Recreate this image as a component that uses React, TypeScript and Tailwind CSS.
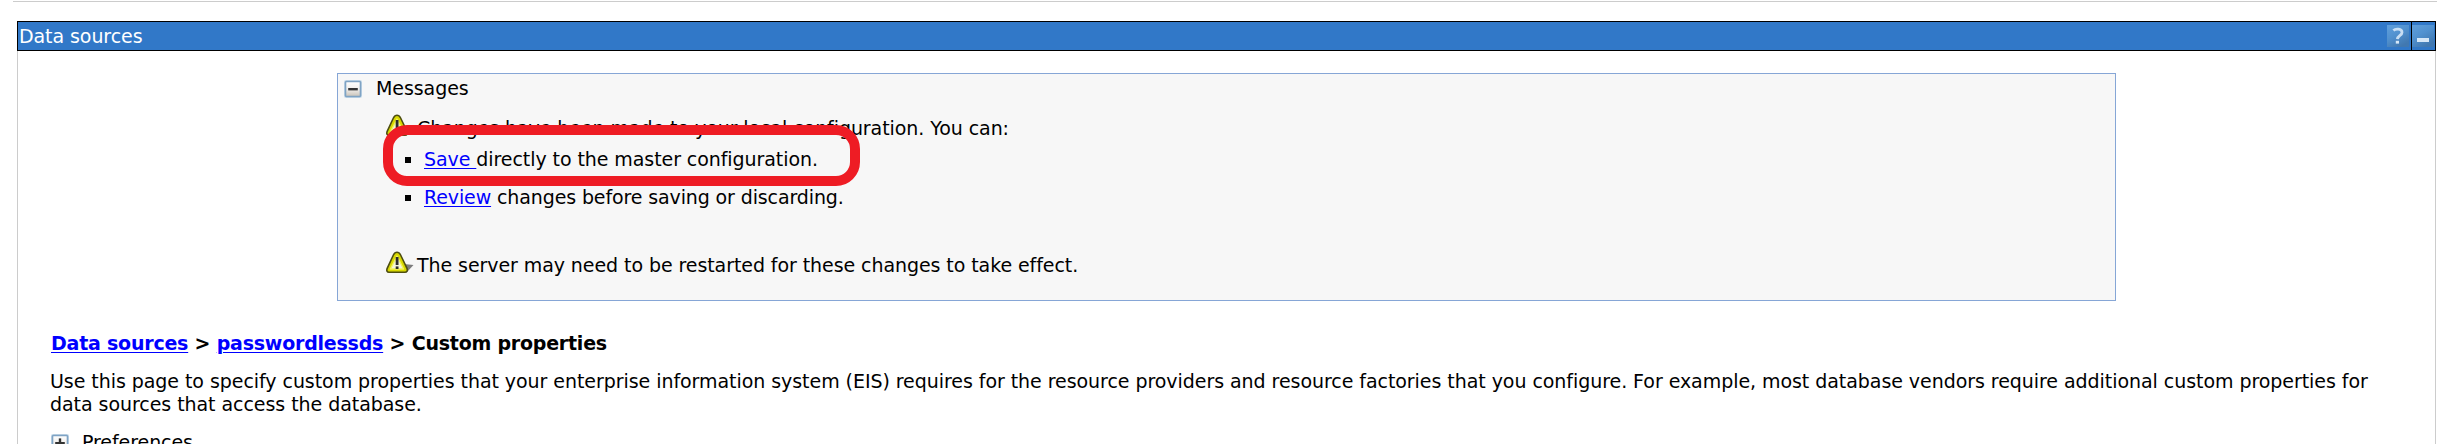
import React from 'react';

function ToggleIcon({ open }: { open: boolean }) {
  return (
    <svg width="18" height="18" viewBox="0 0 18 18" className="block shrink-0">
      <defs>
        <linearGradient id="toggleFill" x1="0" y1="0" x2="0" y2="1">
          <stop offset="0" stopColor="#ffffff" />
          <stop offset="0.5" stopColor="#f1efec" />
          <stop offset="1" stopColor="#c9c2b8" />
        </linearGradient>
      </defs>
      <rect x="0" y="0" width="18" height="18" rx="2" fill="#c5d8e8" />
      <rect x="1.5" y="1.5" width="15" height="15" rx="1" fill="url(#toggleFill)" stroke="#7fa3c4" strokeWidth="1.6" />
      <rect x="4.2" y="8" width="9.6" height="2.4" fill="#333333" />
      {!open && <rect x="7.8" y="4.4" width="2.4" height="9.6" fill="#333333" />}
    </svg>
  );
}

function WarningIcon() {
  return (
    <svg width="28" height="23" viewBox="0 0 28 23" className="block shrink-0">
      <path d="M18 13 L27.5 14 L21 21 L17 21 Z" fill="#5c5c5e" opacity="0.8" />
      <path d="M11 1.2 C13 1.2 13.8 2.4 14.6 4 L21 17.4 C21.8 19.6 21 21.2 19 21.2 L3 21.2 C1 21.2 0.3 19.6 1.2 17.4 L7.4 4 C8.2 2.4 9 1.2 11 1.2 Z" fill="#d8d800" stroke="#4e4e10" strokeWidth="1.6" />
      <path d="M11 5 L17.6 18 L4.4 18 Z" fill="#f4f4d8" stroke="#f2f25c" strokeWidth="1.4" strokeLinejoin="round" />
      <rect x="9.7" y="6" width="2.8" height="8" fill="#2b2b2b" />
      <rect x="9.7" y="15.4" width="2.8" height="2.6" fill="#2b2b2b" />
    </svg>
  );
}

function TitleButton({ children }: { children: React.ReactNode }) {
  return (
    <svg width="22" height="22" viewBox="0 0 22 22" className="block shrink-0">
      <defs>
        <linearGradient id="buttonFill" x1="0" y1="0" x2="0.6" y2="1">
          <stop offset="0" stopColor="#5f9fdc" />
          <stop offset="0.5" stopColor="#5191cf" />
          <stop offset="1" stopColor="#4178b0" />
        </linearGradient>
      </defs>
      <rect width="22" height="22" fill="url(#buttonFill)" />
      {children}
    </svg>
  );
}

const link = 'text-[#0000ff] underline decoration-1 underline-offset-2';

export default function App() {
  return (
    <div className="h-[444px] overflow-hidden bg-white font-['DejaVu_Sans',Verdana,sans-serif] text-[19px] leading-[23px] tracking-[-0.075px] text-black">
      <div className="mt-px ml-[13px] h-px bg-[#cccccc]" />
      <div className="mt-[19px] mr-px ml-[17px] flex h-[30px] border border-black bg-[#3178c8]">
        <h1 className="flex-1 pt-[3px] pl-px whitespace-nowrap text-white">Data sources</h1>
        <div className="flex w-[24px] pt-[3px]">
          <TitleButton>
            <path d="M6.4 5.4 C8.5 3.4 15 3.4 15 7.4 C15 10.4 10.8 10.4 10.4 14.2" fill="none" stroke="#c8def3" strokeWidth="2.8" />
            <rect x="8.8" y="15.8" width="3.2" height="2.8" fill="#d6e8f8" />
          </TitleButton>
        </div>
        <div className="flex w-[24px] border-l border-black pt-[3px]">
          <TitleButton>
            <rect x="5" y="13" width="12" height="4" fill="#d6e7f7" />
          </TitleButton>
        </div>
      </div>

      <div className="mr-px ml-[17px] h-[393px] border-x border-[#cccccc] pt-[22px]">
        <section className="relative ml-[319px] h-[228px] w-[1779px] border border-[#86a6d6] bg-[#f7f7f7]">
          <div className="flex items-start pt-[3px] pl-[6px]">
            <div className="mt-[3px]"><ToggleIcon open /></div>
            <h2 className="ml-[14px] whitespace-nowrap">Messages</h2>
          </div>
          <div className="mt-[17px] ml-[48px] flex">
            <div className="-mt-[3px]"><WarningIcon /></div>
            <p className="ml-[3px] whitespace-nowrap">Changes have been made to your local configuration. You can:</p>
          </div>
          <ul className="ml-[67px]">
            <li className="mt-[8px] flex items-center">
              <span className="mr-[13px] size-[6px] bg-black" />
              <p className="whitespace-pre"><a className={link}>{'Save '}</a>directly to the master configuration.</p>
            </li>
            <li className="mt-[15px] flex items-center">
              <span className="mr-[13px] size-[6px] bg-black" />
              <p className="whitespace-pre tracking-[-0.12px]"><a className={link}>Review</a> changes before saving or discarding.</p>
            </li>
          </ul>
          <div className="mt-[45px] ml-[48px] flex">
            <div className="-mt-[3px]"><WarningIcon /></div>
            <p className="ml-[3px] whitespace-nowrap">The server may need to be restarted for these changes to take effect.</p>
          </div>
          <div className="absolute top-[51px] left-[45px] h-[61px] w-[477px] rounded-[24px] border-[10px] border-[#ee1c24]" />
        </section>

        <nav className="mt-[31px] ml-[33px] whitespace-pre font-bold tracking-[-0.22px]">
          <a className={link}>Data sources</a>{' > '}<a className={link}>passwordlessds</a>{' > Custom properties'}
        </nav>
        <p className="mt-[15px] ml-[32px] whitespace-nowrap tracking-[-0.055px]">
          Use this page to specify custom properties that your enterprise information system (EIS) requires for the resource providers and resource factories that you configure. For example, most database vendors require additional custom properties for<br />
          data sources that access the database.
        </p>
        <div className="mt-[15px] ml-[33px] flex">
          <div className="mt-[3px]"><ToggleIcon open={false} /></div>
          <span className="ml-[13px]">Preferences</span>
        </div>
      </div>
    </div>
  );
}
